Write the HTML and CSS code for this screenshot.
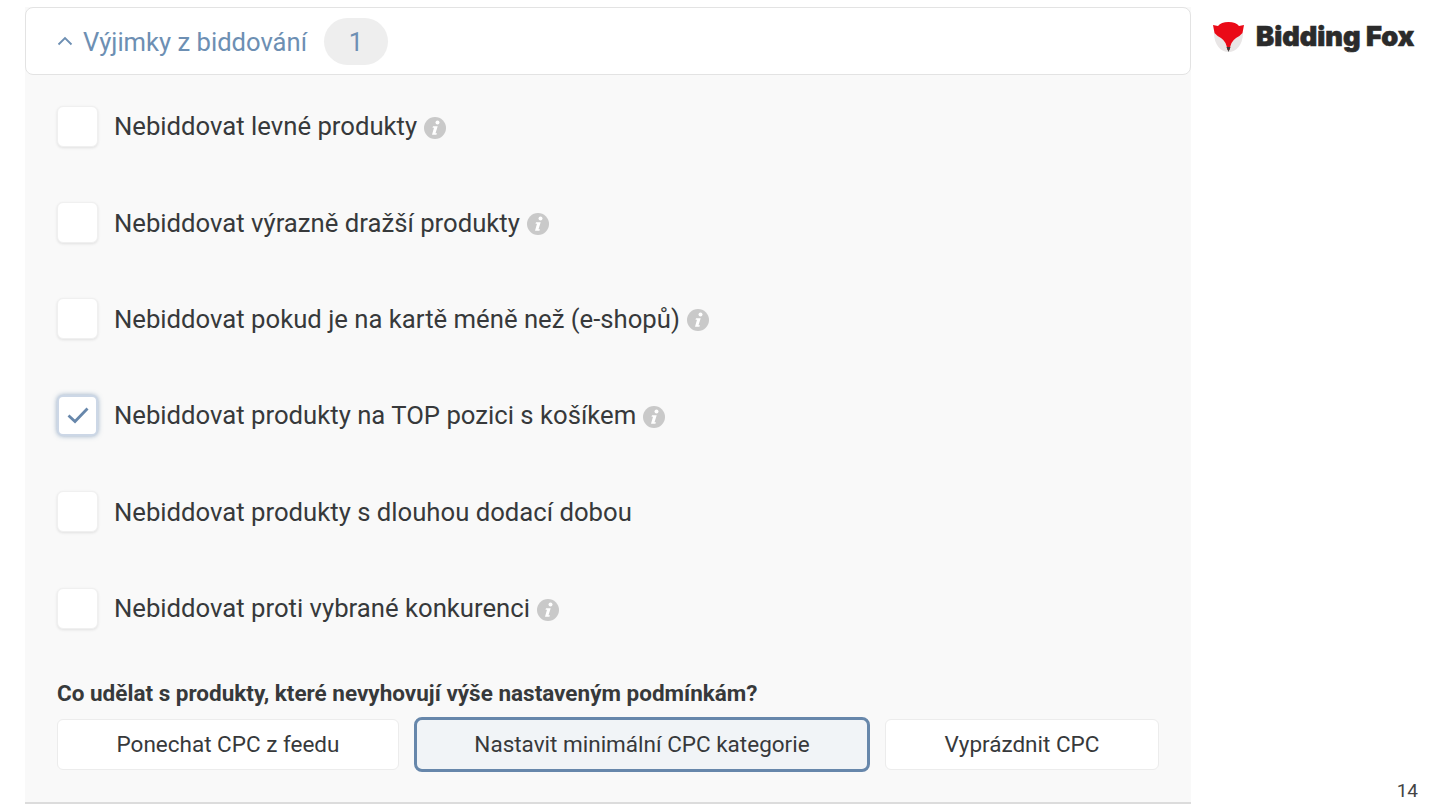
FILE: index.html
```html
<!DOCTYPE html>
<html lang="cs">
<head>
<meta charset="utf-8">
<title>Výjimky z biddování</title>
<link rel="stylesheet" href="styles.css">
</head>
<body>
<div class="slide">
  <main class="panel">
    <header class="panel-head">
      <svg class="chevron" viewBox="0 0 16 10" width="16" height="10"><path d="M1.5 8.5 8 2l6.5 6.5" fill="none" stroke="#6d8fb3" stroke-width="1.8"/></svg>
      <span class="panel-title">Výjimky z biddování</span>
      <span class="count">1</span>
    </header>
    <div class="panel-body">
      <ul class="options">
        <li class="option"><span class="box"></span><span class="label">Nebiddovat levné produkty</span><svg class="info" viewBox="0 0 22 22" width="22" height="22"><circle cx="11" cy="11" r="11" fill="#c9c9c9"/><circle cx="13.500" cy="5.400" r="2" fill="#fff"/><path d="M9 9.200h4.700l-2.200 7h1.500l-.6 1.600H8l2-7H8.500z" fill="#fff"/></svg></li>
        <li class="option"><span class="box"></span><span class="label">Nebiddovat výrazně dražší produkty</span><svg class="info" viewBox="0 0 22 22" width="22" height="22"><circle cx="11" cy="11" r="11" fill="#c9c9c9"/><circle cx="13.500" cy="5.400" r="2" fill="#fff"/><path d="M9 9.200h4.700l-2.200 7h1.500l-.6 1.600H8l2-7H8.500z" fill="#fff"/></svg></li>
        <li class="option"><span class="box"></span><span class="label">Nebiddovat pokud je na kartě méně než (e-shopů)</span><svg class="info" viewBox="0 0 22 22" width="22" height="22"><circle cx="11" cy="11" r="11" fill="#c9c9c9"/><circle cx="13.500" cy="5.400" r="2" fill="#fff"/><path d="M9 9.200h4.700l-2.200 7h1.500l-.6 1.600H8l2-7H8.500z" fill="#fff"/></svg></li>
        <li class="option"><span class="box box-checked"><svg viewBox="0 0 22 18" width="22" height="18"><path d="M1.500 9.500 8 15.500 20.500 2.500" fill="none" stroke="#6787ab" stroke-width="2.800"/></svg></span><span class="label">Nebiddovat produkty na TOP pozici s košíkem</span><svg class="info" viewBox="0 0 22 22" width="22" height="22"><circle cx="11" cy="11" r="11" fill="#c9c9c9"/><circle cx="13.500" cy="5.400" r="2" fill="#fff"/><path d="M9 9.200h4.700l-2.200 7h1.500l-.6 1.600H8l2-7H8.500z" fill="#fff"/></svg></li>
        <li class="option"><span class="box"></span><span class="label">Nebiddovat produkty s dlouhou dodací dobou</span></li>
        <li class="option"><span class="box"></span><span class="label">Nebiddovat proti vybrané konkurenci</span><svg class="info" viewBox="0 0 22 22" width="22" height="22"><circle cx="11" cy="11" r="11" fill="#c9c9c9"/><circle cx="13.500" cy="5.400" r="2" fill="#fff"/><path d="M9 9.200h4.700l-2.200 7h1.500l-.6 1.600H8l2-7H8.500z" fill="#fff"/></svg></li>
      </ul>
      <p class="question">Co udělat s produkty, které nevyhovují výše nastaveným podmínkám?</p>
      <div class="choices">
        <button class="choice choice-keep">Ponechat CPC z feedu</button>
        <button class="choice choice-min">Nastavit minimální CPC kategorie</button>
        <button class="choice choice-empty">Vyprázdnit CPC</button>
      </div>
    </div>
  </main>
  <aside class="side">
    <div class="brand">
      <svg class="fox" viewBox="0 0 32 32" width="32" height="32">
        <path d="M1 12C1 24 8 31 15.500 31 23 31 30 24 30 12z" fill="#e9e6e6"/>
        <path d="M0 4 5 5Q8 1 15.500 1 23 1 26 5L31 4 29.500 12Q27 15 23 17 18 20 16.500 29H14.500Q13 20 8 17 4 15 1.500 12z" fill="#ea0a17"/>
        <path d="M13.500 26h4l-2 5z" fill="#3a3a3a"/>
      </svg>
      <span class="brand-name">Bidding Fox</span>
    </div>
    <span class="page-no">14</span>
  </aside>
</div>
</body>
</html>
```
FILE: styles.css
```css
* { box-sizing: border-box; }
html, body { margin: 0; padding: 0; background: #fff; }
body { width: 1440px; height: 810px; overflow: hidden; font-family: Roboto, "Liberation Sans", sans-serif; color: #37393b; }
.slide { display: flex; height: 810px; padding: 7px 0 0 25px; }
.panel { width: 1166px; height: 797px; background: #f9f9f9; border-bottom: 2px solid #dcdcdc; display: flex; flex-direction: column; }
.panel-head { height: 68px; flex: none; background: #fff; border: 1px solid #e3e3e3; border-radius: 8px; display: flex; align-items: center; padding-left: 31px; }
.chevron { margin-right: 10px; }
.panel-title { font-size: 25.6px; color: #6d8fb3; padding-top: 2px; }
.count { margin-left: 17px; width: 64px; height: 47px; padding-top: 2px; border-radius: 24px; background: #eeeeee; color: #6d8fb3; font-size: 25.6px; display: flex; align-items: center; justify-content: center; }
.panel-body { padding: 0 32px; flex: 1; }
.options { list-style: none; margin: 0; padding: 3px 0 0; display: flex; flex-direction: column; }
.option { height: 96.4px; display: flex; align-items: center; }
.box { width: 41px; height: 41px; flex: none; background: #fff; border-radius: 6px; border: 1px solid #f0f0f0; box-shadow: 0 1px 3px rgba(0,0,0,.1); display: flex; align-items: center; justify-content: center; }
.box-checked { border: 2px solid #ccd7e6; box-shadow: 0 0 5px rgba(103,135,171,.7); }
.label { margin-left: 16px; font-size: 25.7px; }
.info { margin-left: 7px; margin-top: 3px; flex: none; }
.question { margin: 22px 0 8.5px; font-size: 22.5px; font-weight: 700; line-height: 30px; }
.choices { display: flex; gap: 15px; align-items: center; }
.choice { height: 51px; background: #fff; border: 1px solid #ececec; border-radius: 6px; font: 400 22.5px Roboto, "Liberation Sans", sans-serif; color: #37393b; padding: 0; }
.choice-keep { width: 342px; }
.choice-min { width: 456px; height: 55px; background: #f1f4f7; border: 3.5px solid #6787ab; border-radius: 8px; }
.choice-empty { width: 274px; }
.side { width: 249px; height: 796px; display: flex; flex-direction: column; justify-content: space-between; }
.brand { display: flex; align-items: center; margin: 13px 0 0 22px; gap: 11px; }
.brand-name { font-family: Inter, Roboto, sans-serif; font-weight: 900; font-size: 27.2px; color: #2b2b2b; -webkit-text-stroke: .6px #2b2b2b; }
.page-no { align-self: flex-end; margin-right: 22px; font-size: 19px; line-height: 24px; color: #444; }
```
